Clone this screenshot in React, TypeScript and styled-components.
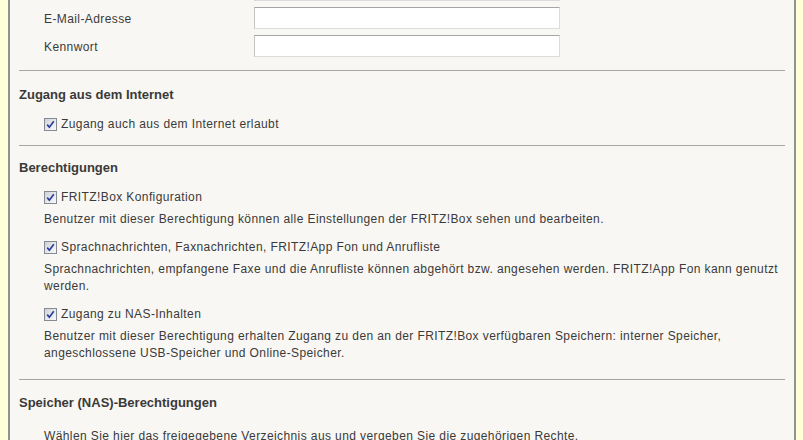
import React from "react";
import { styled, createGlobalStyle } from "styled-components";

const GlobalStyle = createGlobalStyle`
    html, body {
        margin: 0;
        padding: 0;
        background: #ffffd9;
        overflow: hidden;
    }
    body {
        font-family: "Liberation Sans", Arial, sans-serif;
        font-size: 12px;
        letter-spacing: 0.4px;
        color: #3a3a3a;
    }
`;

const Page = styled.div`
    display: flex;
    height: 440px;
    padding: 0 7px 0 8px;
    box-sizing: border-box;
`;

const Panel = styled.div`
    flex: 1;
    background: #f9f7f3;
    border-left: 2px solid #8f948f;
    border-right: 2px solid #8f948f;
    padding: 0 9px;
    overflow: hidden;
`;

const FieldRow = styled.div<{ $ghost?: boolean }>`
    display: grid;
    grid-template-columns: 210px 306px;
    align-items: center;
    padding-left: 25px;
    margin-top: ${(p) => (p.$ghost ? "-21px" : "6px")};
`;

const Label = styled.label`
    line-height: 16px;
    padding-top: 1px;
`;

const TextInput = styled.input`
    box-sizing: border-box;
    height: 22px;
    width: 306px;
    margin: 0;
    background: #ffffff;
    border: 1px solid #dcdcdc;
    border-top-color: #a6a6a6;
    border-left-color: #c4c4c4;
    outline: none;
`;

const Divider = styled.hr<{ $gap: number }>`
    border: 0;
    height: 1px;
    background: #a4a6a2;
    margin: ${(p) => p.$gap}px 0 0 0;
`;

const Heading = styled.h3<{ $gap: number }>`
    margin: ${(p) => p.$gap}px 0 0 0;
    font-size: 13px;
    line-height: 16px;
    font-weight: bold;
    letter-spacing: 0;
    color: #3a3a3a;
`;

const CheckRow = styled.label<{ $gap: number }>`
    display: flex;
    align-items: center;
    gap: 4px;
    margin: ${(p) => p.$gap}px 0 0 25px;
    line-height: 16px;
`;

const Box = styled.span`
    display: inline-flex;
    align-items: center;
    justify-content: center;
    box-sizing: border-box;
    width: 13px;
    height: 13px;
    border: 1px solid #858b93;
    background: linear-gradient(135deg, #cfd2d6 0%, #e6e7e9 50%, #f8f8f8 100%);
`;

const Note = styled.p<{ $gap: number }>`
    margin: ${(p) => p.$gap}px 0 0 25px;
    line-height: 17px;
    padding-right: 2px;
`;

const CheckMark = () => (
    <Box>
        <svg width="9" height="9" viewBox="0 0 9 9">
            <path d="M1.2 4.6 L3.4 7.2 L7.8 1.2" fill="none" stroke="#2b3d9e" strokeWidth="1.7" />
        </svg>
    </Box>
);

type CheckProps = {
    gap: number;
    children: React.ReactNode;
};

const Check = ({ gap, children }: CheckProps) => (
    <CheckRow $gap={gap}>
        <CheckMark />
        <span>{children}</span>
    </CheckRow>
);

const App = () => {
    return (
        <>
            <GlobalStyle />
            <Page>
                <Panel>
                    {/* row above, scrolled out of view: only the input's lower edge shows */}
                    <FieldRow $ghost>
                        <span />
                        <TextInput type="text" />
                    </FieldRow>
                    <FieldRow>
                        <Label>E-Mail-Adresse</Label>
                        <TextInput type="text" />
                    </FieldRow>
                    <FieldRow>
                        <Label>Kennwort</Label>
                        <TextInput type="password" />
                    </FieldRow>

                    <Divider $gap={13} />
                    <Heading $gap={16}>Zugang aus dem Internet</Heading>
                    <Check gap={13}>Zugang auch aus dem Internet erlaubt</Check>

                    <Divider $gap={13} />
                    <Heading $gap={14}>Berechtigungen</Heading>
                    <Check gap={13}>FRITZ!Box Konfiguration</Check>
                    <Note $gap={6}>
                        Benutzer mit dieser Berechtigung können alle Einstellungen der FRITZ!Box sehen und bearbeiten.
                    </Note>
                    <Check gap={11}>Sprachnachrichten, Faxnachrichten, FRITZ!App Fon und Anrufliste</Check>
                    <Note $gap={6}>
                        Sprachnachrichten, empfangene Faxe und die Anrufliste können abgehört bzw. angesehen werden. FRITZ!App Fon kann genutzt werden.
                    </Note>
                    <Check gap={11}>Zugang zu NAS-Inhalten</Check>
                    <Note $gap={6}>
                        Benutzer mit dieser Berechtigung erhalten Zugang zu den an der FRITZ!Box verfügbaren Speichern: interner Speicher, angeschlossene USB-Speicher und Online-Speicher.
                    </Note>

                    <Divider $gap={17} />
                    <Heading $gap={15}>Speicher (NAS)-Berechtigungen</Heading>
                    <Note $gap={17}>
                        Wählen Sie hier das freigegebene Verzeichnis aus und vergeben Sie die zugehörigen Rechte.
                    </Note>
                </Panel>
            </Page>
        </>
    );
};

export default App;
